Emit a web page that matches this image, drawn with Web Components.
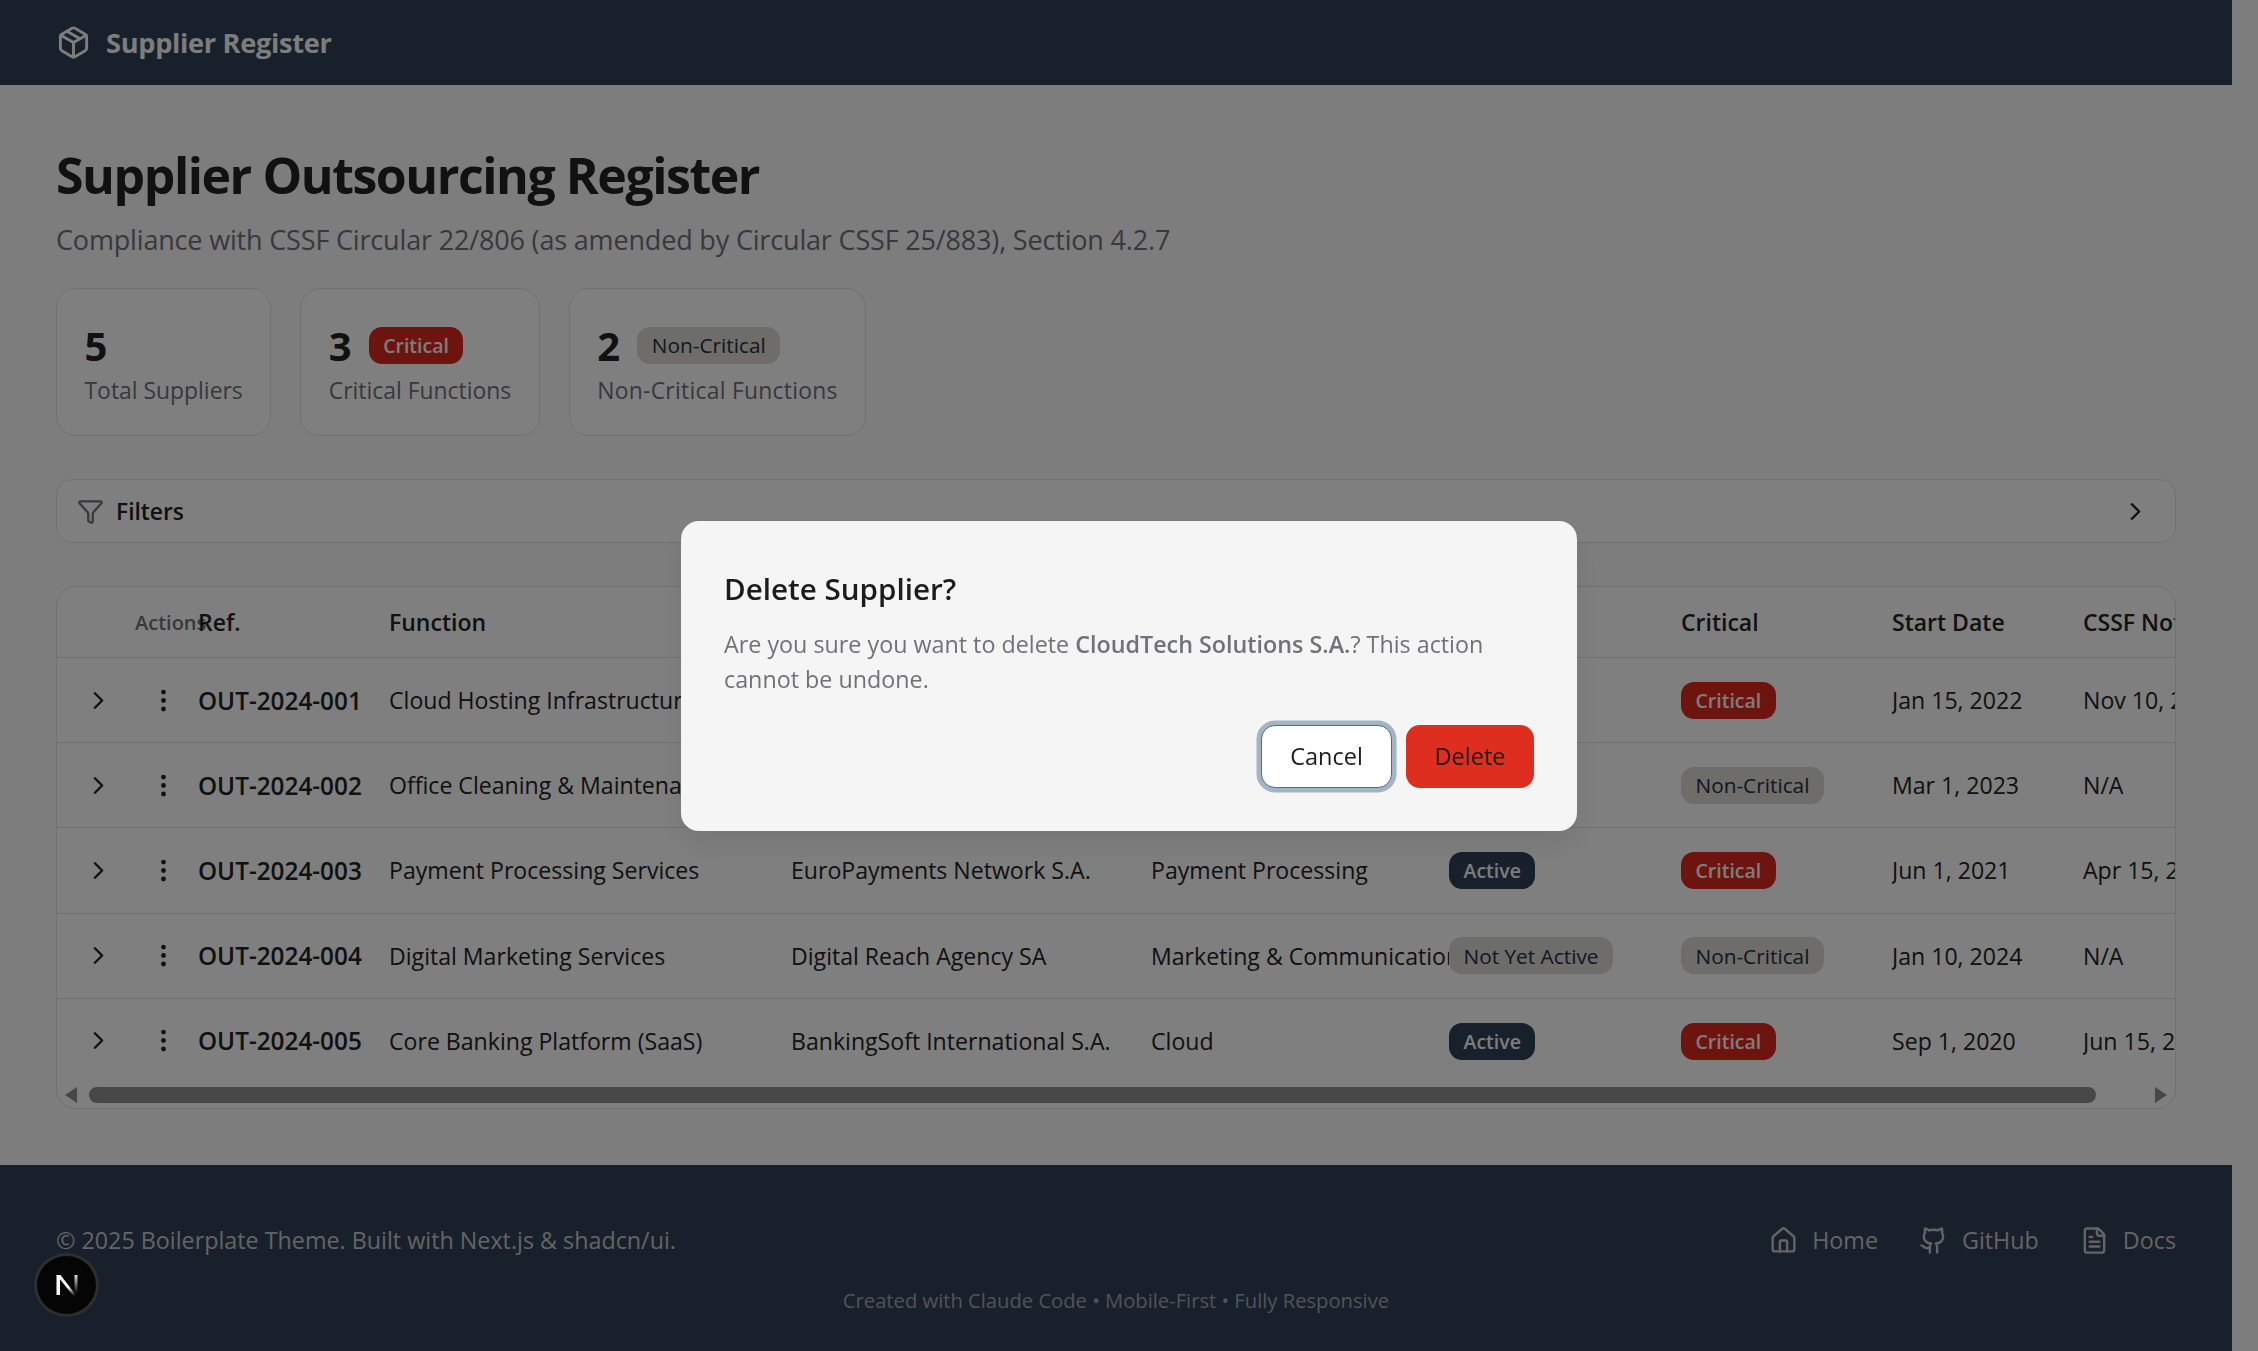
<!DOCTYPE html>
<html lang="en">
<head>
<meta charset="utf-8">
<title>Supplier Register</title>
<style>
  html, body { margin: 0; height: 100%; overflow: hidden; }
  body {
    background: #fafafa;
    color: #111;
    font-family: "Open Sans", "Liberation Sans", sans-serif;
    padding-right: 26px;
    box-sizing: border-box;
  }
</style>
</head>
<body>
<app-header>Supplier Register</app-header>
<page-main>
  <page-title slot="title" sub="Compliance with CSSF Circular 22/806 (as amended by Circular CSSF 25/883), Section 4.2.7">Supplier Outsourcing Register</page-title>
  <stat-row>
    <stat-card value="5">Total Suppliers</stat-card>
    <stat-card value="3"><status-badge slot="badge" kind="critical">Critical</status-badge>Critical Functions</stat-card>
    <stat-card value="2" style="letter-spacing:.26px"><status-badge slot="badge" kind="muted">Non-Critical</status-badge>Non-Critical Functions</stat-card>
  </stat-row>
  <filter-bar>Filters</filter-bar>
  <supplier-table></supplier-table>
</page-main>
<app-footer></app-footer>
<delete-dialog>CloudTech Solutions S.A.</delete-dialog>
<dev-badge></dev-badge>

<script>
const ICONS = {
  package: '<path d="M11 21.73a2 2 0 0 0 2 0l7-4a2 2 0 0 0 1-1.73V8a2 2 0 0 0-1-1.73l-7-4a2 2 0 0 0-2 0l-7 4A2 2 0 0 0 3 8v8a2 2 0 0 0 1 1.73z"/><path d="M12 22V12"/><polyline points="3.29 7 12 12 20.71 7"/><path d="m7.5 4.27 9 5.15"/>',
  funnel: '<path d="M10 20a1 1 0 0 0 .553.895l2 1A1 1 0 0 0 14 21v-7a2 2 0 0 1 .517-1.341L21.74 4.67A1 1 0 0 0 21 3H3a1 1 0 0 0-.742 1.67l7.225 7.989A2 2 0 0 1 10 14z"/>',
  chevron: '<path d="m9 18 6-6-6-6"/>',
  dots: '<circle cx="12" cy="12" r="1"/><circle cx="12" cy="5" r="1"/><circle cx="12" cy="19" r="1"/>',
  house: '<path d="M15 21v-8a1 1 0 0 0-1-1h-4a1 1 0 0 0-1 1v8"/><path d="M3 10a2 2 0 0 1 .709-1.528l7-6a2 2 0 0 1 2.582 0l7 6A2 2 0 0 1 21 10v9a2 2 0 0 1-2 2H5a2 2 0 0 1-2-2z"/>',
  github: '<path d="M15 22v-4a4.8 4.8 0 0 0-1-3.5c3 0 6-2 6-5.5.08-1.25-.27-2.48-1-3.5.28-1.15.28-2.35 0-3.5 0 0-1 0-3 1.5-2.64-.5-5.36-.5-8 0C6 2 5 2 5 2c-.3 1.15-.3 2.35 0 3.5A5.403 5.403 0 0 0 4 9c0 3.5 3 5.5 6 5.5-.39.49-.68 1.05-.85 1.65-.17.6-.22 1.23-.15 1.85v4"/><path d="M9 18c-4.51 2-5-2-7-2"/>',
  file: '<path d="M15 2H6a2 2 0 0 0-2 2v16a2 2 0 0 0 2 2h12a2 2 0 0 0 2-2V7Z"/><path d="M14 2v4a2 2 0 0 0 2 2h4"/><path d="M10 9H8"/><path d="M16 13H8"/><path d="M16 17H8"/>'
};

function icon(name, size) {
  return `<svg width="${size}" height="${size}" viewBox="0 0 24 24" fill="none" stroke="currentColor" stroke-width="2" stroke-linecap="round" stroke-linejoin="round" style="display:block;flex:none">${ICONS[name]}</svg>`;
}

class AppHeader extends HTMLElement {
  connectedCallback() {
    this.attachShadow({ mode: 'open' });
    this.shadowRoot.innerHTML = `
      <style>
        :host { display: flex; align-items: center; gap: 15px; height: 85px; padding: 0 56px; background: #304056; color: #fafafa; box-sizing: border-box; }
        .name { font-size: 27.2px; font-weight: 700; letter-spacing: -.3px; }
      </style>
      ${icon('package', 35)}
      <span class="name"><slot></slot></span>`;
  }
}

class PageMain extends HTMLElement {
  connectedCallback() {
    this.attachShadow({ mode: 'open' });
    this.shadowRoot.innerHTML = `
      <style>
        :host { display: flex; flex-direction: column; padding: 56px 56px 56px; box-sizing: border-box; }
      </style>
      <slot name="title"></slot>
      <slot></slot>`;
  }
}

class PageTitle extends HTMLElement {
  connectedCallback() {
    this.attachShadow({ mode: 'open' });
    this.shadowRoot.innerHTML = `
      <style>
        :host { display: block; }
        h1 { margin: 0; font-size: 50px; line-height: 68px; font-weight: 700; letter-spacing: -1.45px; color: #222; }
        p { margin: 11px 0 0; font-size: 27px; line-height: 40px; color: #71717a; letter-spacing: -.17px; }
      </style>
      <h1><slot></slot></h1>
      <p>${this.getAttribute('sub')}</p>`;
  }
}

class StatRow extends HTMLElement {
  connectedCallback() {
    this.attachShadow({ mode: 'open' });
    this.shadowRoot.innerHTML = `
      <style>
        :host { display: flex; gap: 29px; margin-top: 28px; }
      </style>
      <slot></slot>`;
  }
}

class StatCard extends HTMLElement {
  connectedCallback() {
    this.attachShadow({ mode: 'open' });
    this.shadowRoot.innerHTML = `
      <style>
        :host { display: block; height: 148px; padding: 31px 27.5px 0; box-sizing: border-box; background: #fff; border: 1.5px solid #e4e4e7; border-radius: 20px; }
        .top { display: flex; align-items: center; gap: 17px; height: 50px; }
        .num { font-size: 40px; font-weight: 700; color: #222; }
        .label { margin-top: 4px; font-size: 22.9px; line-height: 34px; color: #71717a; white-space: nowrap; }
      </style>
      <div class="top"><span class="num">${this.getAttribute('value')}</span><slot name="badge"></slot></div>
      <div class="label"><slot></slot></div>`;
  }
}

class StatusBadge extends HTMLElement {
  connectedCallback() {
    this.attachShadow({ mode: 'open' });
    this.shadowRoot.innerHTML = `
      <style>
        :host { display: inline-flex; align-items: center; height: 37px; padding: 0 14.5px; border-radius: 13px; box-sizing: border-box; font-size: 19.5px; font-weight: 600; letter-spacing: normal; white-space: nowrap; }
        :host([kind="critical"]) { background: #dc281c; color: #fafafa; }
        :host([kind="muted"]) { background: #dcdad2; color: #1f2f45; font-size: 20.8px; font-weight: 500; }
        :host([kind="dark"]) { background: #304056; color: #fafafa; }
      </style>
      <slot></slot>`;
  }
}

class FilterBar extends HTMLElement {
  connectedCallback() {
    this.attachShadow({ mode: 'open' });
    this.shadowRoot.innerHTML = `
      <style>
        :host { display: flex; align-items: center; height: 64px; margin-top: 43px; padding: 0 25px 0 20px; box-sizing: border-box; background: #fff; border: 1.5px solid #e4e4e7; border-radius: 16px; }
        .funnel { color: #71717a; }
        .label { margin-left: 12px; font-size: 22.8px; font-weight: 600; color: #222; flex: 1; }
        .chev { color: #222; }
      </style>
      <span class="funnel">${icon('funnel', 27)}</span>
      <span class="label"><slot></slot></span>
      <span class="chev">${icon('chevron', 29)}</span>`;
  }
}

const COLUMNS = '78px 63px 191px 402px 360px 298px 232px 211px 191px 220px';

// one row of the grid, the cells come in through the slot
class SupplierRow extends HTMLElement {
  connectedCallback() {
    this.attachShadow({ mode: 'open' });
    this.shadowRoot.innerHTML = `
      <style>
        :host { display: grid; grid-template-columns: ${COLUMNS}; align-items: center; height: 85.2px; border-top: 1.5px solid #e4e4e7; box-sizing: border-box; font-size: 23.1px; color: #222; }
        :host([head]) { height: 70px; border-top: 0; font-weight: 600; font-size: 23px; }
      </style>
      <slot></slot>`;
  }
}

class SupplierTable extends HTMLElement {
  connectedCallback() {
    const rows = [
      ['OUT-2024-001', 'Cloud Hosting Infrastructure', '', '', null, 'critical', 'Jan 15, 2022', 'Nov 10, 2021'],
      ['OUT-2024-002', 'Office Cleaning & Maintenance', '', '', null, 'muted', 'Mar 1, 2023', 'N/A'],
      ['OUT-2024-003', 'Payment Processing Services', 'EuroPayments Network S.A.', 'Payment Processing', 'Active', 'critical', 'Jun 1, 2021', 'Apr 15, 2021'],
      ['OUT-2024-004', 'Digital Marketing Services', 'Digital Reach Agency SA', 'Marketing & Communications', 'Not Yet Active', 'muted', 'Jan 10, 2024', 'N/A'],
      ['OUT-2024-005', 'Core Banking Platform (SaaS)', 'BankingSoft International S.A.', 'Cloud', 'Active', 'critical', 'Sep 1, 2020', 'Jun 15, 2020']
    ];
    const cell = (html, extra = '') => `<div class="c ${extra}">${html}</div>`;
    const body = rows.map(r => `
      <supplier-row>
        ${cell(`<span class="chev">${icon('chevron', 29)}</span>`)}
        ${cell(`<span class="dots">${icon('dots', 29)}</span>`)}
        ${cell(r[0], 'ref')}
        ${cell(r[1].replace('&', '&amp;'))}
        ${cell(r[2])}
        ${cell(r[3].replace('&', '&amp;'))}
        ${cell(r[4] ? `<status-badge kind="${r[4] === 'Active' ? 'dark' : 'muted'}">${r[4]}</status-badge>` : '')}
        ${cell(`<status-badge kind="${r[5]}">${r[5] === 'critical' ? 'Critical' : 'Non-Critical'}</status-badge>`)}
        ${cell(r[6])}
        ${cell(r[7])}
      </supplier-row>`).join('');
    this.attachShadow({ mode: 'open' });
    this.shadowRoot.innerHTML = `
      <style>
        :host { display: block; margin-top: 43px; background: #fff; border: 1.5px solid #e4e4e7; border-radius: 20px; overflow: hidden; box-sizing: border-box; height: 523px; }
        .c { min-width: 0; overflow: hidden; white-space: nowrap; }
        .ref { font-weight: 600; font-size: 24.3px; }
        .chev { display: block; padding-left: 27px; }
        .dots { display: block; padding-left: 13.5px; }
        .actions { overflow: visible; font-size: 20px; font-weight: 600; color: #71717a; }
        status-badge { vertical-align: middle; }
        .bar { display: flex; align-items: center; justify-content: space-between; height: 25px; padding: 0 8px; box-sizing: border-box; }
        .thumb { width: 2007px; margin-left: 12px; margin-right: auto; height: 16px; border-radius: 8px; background: #8e8e8e; }
        .arrow { width: 0; height: 0; border-top: 8px solid transparent; border-bottom: 8px solid transparent; }
        .arrow.l { border-right: 12px solid #8e8e8e; }
        .arrow.r { border-left: 12px solid #8e8e8e; }
      </style>
      <supplier-row head>
        <div class="c"></div>
        ${cell('Actions', 'actions')}
        ${cell('Ref.')}
        ${cell('Function')}
        <div class="c"></div>
        <div class="c"></div>
        <div class="c"></div>
        ${cell('Critical')}
        ${cell('Start Date')}
        ${cell('CSSF Notified')}
      </supplier-row>
      ${body}
      <div class="bar"><span class="arrow l"></span><span class="thumb"></span><span class="arrow r"></span></div>`;
  }
}

class AppFooter extends HTMLElement {
  connectedCallback() {
    const link = (name, text) => `<a>${icon(name, 29)}<span>${text}</span></a>`;
    this.attachShadow({ mode: 'open' });
    this.shadowRoot.innerHTML = `
      <style>
        :host { display: block; padding: 56px 56px 0; height: 186px; box-sizing: border-box; background: #304056; color: #c9c9c9; font-size: 23.3px; }
        .top { display: flex; align-items: center; justify-content: space-between; height: 38px; }
        nav { display: flex; gap: 41px; }
        a { display: flex; align-items: center; gap: 14px; }
        .sub { margin-top: 27px; text-align: center; font-size: 20.2px; line-height: 28px; color: #a2a6ac; }
      </style>
      <div class="top">
        <span>© 2025 Boilerplate Theme. Built with Next.js &amp; shadcn/ui.</span>
        <nav>${link('house', 'Home')}${link('github', 'GitHub')}${link('file', 'Docs')}</nav>
      </div>
      <div class="sub">Created with Claude Code • Mobile-First • Fully Responsive</div>`;
  }
}

class DeleteDialog extends HTMLElement {
  connectedCallback() {
    this.attachShadow({ mode: 'open' });
    this.shadowRoot.innerHTML = `
      <style>
        :host { position: fixed; inset: 0; display: flex; align-items: center; justify-content: center; background: rgba(0,0,0,.5); }
        .box { display: flex; flex-direction: column; width: 896px; height: 310px; padding: 48px 43px 43px; box-sizing: border-box; background: #f5f5f5; border-radius: 18px; box-shadow: 0 14px 28px rgba(0,0,0,.08); }
        h2 { margin: 0; font-size: 29.6px; line-height: 40px; font-weight: 600; color: #1c1c1c; }
        p { margin: 18px 0 0; font-size: 23.3px; line-height: 35px; color: #71717a; }
        b { font-weight: 600; }
        .btns { display: flex; justify-content: flex-end; gap: 14px; margin-top: auto; }
        button { height: 63px; border-radius: 14px; font: 500 23.5px "Open Sans", sans-serif; color: #1c1c1c; padding: 0; }
        .cancel { width: 131px; background: #fff; border: 1.5px solid #4f6a88; box-shadow: 0 0 0 4.5px #a5b4c4; }
        .del { width: 128px; background: #de2e20; border: 0; }
      </style>
      <div class="box">
        <h2>Delete Supplier?</h2>
        <p>Are you sure you want to delete <b><slot></slot></b>? This action cannot be undone.</p>
        <div class="btns"><button class="cancel">Cancel</button><button class="del">Delete</button></div>
      </div>`;
  }
}

class DevBadge extends HTMLElement {
  connectedCallback() {
    this.attachShadow({ mode: 'open' });
    this.shadowRoot.innerHTML = `
      <style>
        :host { position: fixed; left: 34px; top: 1253px; width: 65px; height: 64px; box-sizing: border-box; border-radius: 50%; background: #050505; border: 3px solid #2e2e2e; display: flex; align-items: center; justify-content: center; }
      </style>
      <svg width="32" height="32" viewBox="0 0 32 32">
        <defs>
          <linearGradient id="d" x1="0" y1="0" x2="0.6" y2="1"><stop offset=".6" stop-color="#fff"/><stop offset="1" stop-color="#fff" stop-opacity="0"/></linearGradient>
          <linearGradient id="s" x1="0" y1="0" x2="0" y2="1"><stop offset="0" stop-color="#ddd"/><stop offset="1" stop-color="#ddd" stop-opacity="0"/></linearGradient>
        </defs>
        <rect x="5.5" y="6" width="3.5" height="20" fill="#fff"/>
        <polygon points="5.5,6 9.5,6 28,30 25,30" fill="url(#d)"/>
        <rect x="23.5" y="6" width="3" height="18" fill="url(#s)"/>
      </svg>`;
  }
}

customElements.define('app-header', AppHeader);
customElements.define('page-main', PageMain);
customElements.define('page-title', PageTitle);
customElements.define('stat-row', StatRow);
customElements.define('stat-card', StatCard);
customElements.define('status-badge', StatusBadge);
customElements.define('filter-bar', FilterBar);
customElements.define('supplier-row', SupplierRow);
customElements.define('supplier-table', SupplierTable);
customElements.define('app-footer', AppFooter);
customElements.define('delete-dialog', DeleteDialog);
customElements.define('dev-badge', DevBadge);
</script>
</body>
</html>
